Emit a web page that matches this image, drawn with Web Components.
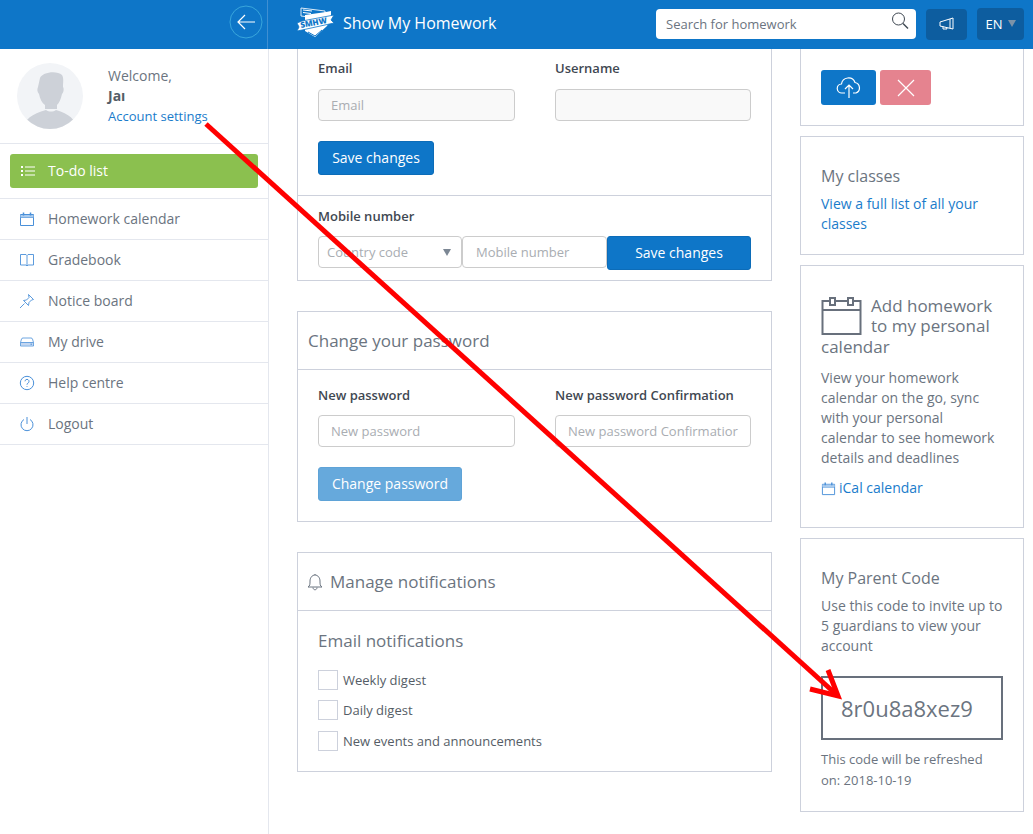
<!DOCTYPE html>
<html>
<head>
<meta charset="utf-8">
<title>Show My Homework</title>
<style>
    html, body { margin: 0; height: 834px; overflow: hidden; background: #fff; }
    body { font: 14px/20px "Open Sans", sans-serif; color: #6b7480; }
</style>
</head>
<body>
<smhw-app>
    <smhw-header slot="header"></smhw-header>
    <smhw-sidebar slot="sidebar">
        <nav-item label="Homework calendar" icon="calendar"></nav-item>
        <nav-item label="Gradebook" icon="book"></nav-item>
        <nav-item label="Notice board" icon="pin"></nav-item>
        <nav-item label="My drive" icon="drive"></nav-item>
        <nav-item label="Help centre" icon="help"></nav-item>
        <nav-item label="Logout" icon="power"></nav-item>
    </smhw-sidebar>
    <account-forms slot="main"></account-forms>
    <side-panels slot="aside"></side-panels>
</smhw-app>
<red-arrow></red-arrow>

<script>
const ICONS = {
    calendar: '<path d="M1.500 3.500h13v11h-13zM1.500 6.500h13"/><path d="M1.500 4h13v2.500h-13z" fill="#a9cbee" stroke="none"/><path d="M4.500 1.500v3M11.500 1.500v3" stroke-width="1.500"/>',
    book: '<path d="M1.500 2.500H7l1 1 1-1h5.500v10.500H9l-1 1-1-1H1.500zM8 3.500V14" stroke-width=".9"/>',
    pin: '<path d="M9.500 1.500l5 5-2 .5-2.500 2.500-.5 3-5-5 3-.5L10 4.500zM5.500 10.500L1 15" stroke-width=".9"/>',
    drive: '<path d="M2 8.500h12v3H2z" fill="#c3d6f0" stroke="none"/><path d="M1.500 8.500l1-3.500q.3-1 1.500-1h8q1.200 0 1.500 1l1 3.500v3.500h-13zM1.500 8.500h13" stroke-width=".8"/><path d="M11.500 10.200h1.500"/>',
    help: '<circle cx="8" cy="8" r="6.700"/><path d="M6 6.300a2 2 0 1 1 3 1.800c-.7.4-1 .8-1 1.600M8 11.200v.8"/>',
    power: '<path d="M5 3.500a6 6 0 1 0 6 0M8 1v7"/>'
};

// shared by all the form pieces
const FORM_CSS = `
    .label { font-size: 13px; line-height: 18px; font-weight: 600; color: #3f4852; margin: 0 0 11px; }
    .input {
        box-sizing: border-box; height: 32px; border: 1px solid #ccc; border-radius: 4px;
        padding: 0 12px; font-size: 13px; line-height: 30px; color: #a9adb2; background: #fff;
        white-space: nowrap; overflow: hidden;
    }
    .input.off { background: #f9f9f9; }
    .btn {
        box-sizing: border-box; display: inline-flex; align-items: center; justify-content: center;
        height: 34px; padding: 0; background: #0e76c8; border: 1px solid #0c6cb8;
        border-radius: 3px; color: #fff; font-size: 14px; white-space: nowrap;
    }
`;

class SmhwApp extends HTMLElement {
    constructor() {
        super();
        this.attachShadow({mode: 'open'});
        this.shadowRoot.innerHTML = `
        <style>
            :host { display: grid; grid-template-columns: 269px 1fr; grid-template-rows: 49px 785px; height: 834px; overflow: hidden; }
            .head { grid-column: 1 / 3; }
            .body { display: flex; align-items: flex-start; gap: 28px; padding-left: 28px; padding-right: 9px; }
        </style>
        <div class="head"><slot name="header"></slot></div>
        <slot name="sidebar"></slot>
        <div class="body"><slot name="main"></slot><slot name="aside"></slot></div>`;
    }
}

class SmhwHeader extends HTMLElement {
    constructor() {
        super();
        this.attachShadow({mode: 'open'});
        this.shadowRoot.innerHTML = `
        <style>
            :host { display: flex; align-items: center; height: 49px; background: #0e76c8; color: #fff; font-family: "Open Sans", sans-serif; }
            .back { box-sizing: border-box; width: 268px; height: 49px; padding: 5px 4px 0 0; display: flex; justify-content: flex-end; border-right: 1px solid #3f8fd2; }
            .back svg { display: block; }
            .brand { display: flex; align-items: center; gap: 8px; margin-left: 29px; font-size: 16px; flex: 1; padding-bottom: 4px; }
            .brand svg { margin-left: -1px; margin-top: 1px; }
            .search {
                box-sizing: border-box; width: 260px; height: 30px; background: #fff; border-radius: 4px;
                padding: 0 10px; margin-top: -1px; display: flex; align-items: center; justify-content: space-between;
                color: #6b7480; font-size: 13px;
            }
            .search svg { margin: -6px -3px 0 0; }
            .tool { box-sizing: border-box; height: 31px; background: #0d5d9f; border-radius: 4px; display: flex; align-items: center; justify-content: center; margin-top: -1px; }
            .megaphone { width: 41px; margin-left: 10px; }
            .lang { width: 47px; height: 32px; margin: -2px 9px 0 10px; font-size: 13px; gap: 5px; }
            .lang i { width: 0; height: 0; border: 4.500px solid transparent; border-top: 7px solid #7c93a8; border-bottom: 0; }
        </style>
        <div class="back">
            <svg width="34" height="34" viewBox="0 0 34 34" fill="none" stroke="#fff">
                <circle cx="17" cy="17" r="16" stroke="#39a6dc"/>
                <path d="M26 17H9M16 10l-7 7 7 7" stroke-width="1.200"/>
            </svg>
        </div>
        <div class="brand">
            <svg width="39" height="32" viewBox="0 0 39 32">
                <path d="M5 1l24 3v8l-24-3z" fill="none" stroke="#dcebf7"/>
                <path d="M7 3l9 1M7 5.500l8 1" stroke="#fff"/>
                <path d="M9 8l21-3 5-1v7l-4 8-12 11-10-6v-8z" fill="#fff"/>
                <path d="M1 16l5-2 32-6-3 5 3 3-32 7-5 1 2-4z" fill="#fff" stroke="#0e76c8" stroke-width=".8"/>
                <path d="M12 25l7 4 7-6" fill="none" stroke="#0e76c8"/>
                <text x="5" y="21" transform="rotate(-11 5 21)" font-size="8" font-weight="800" fill="#0e76c8" font-family="Open Sans, sans-serif">SMHW</text>
            </svg>
            <span>Show My Homework</span>
        </div>
        <div class="search">
            <span>Search for homework</span>
            <svg width="18" height="18" viewBox="0 0 18 18" fill="none" stroke="#3f4852"><circle cx="7.500" cy="7" r="6"/><path d="M12 11.500l5 5" stroke-width="1.400"/></svg>
        </div>
        <div class="tool megaphone">
            <svg width="16" height="14" viewBox="0 0 16 14" fill="none" stroke="#fff"><path d="M1 5l13-4v11L1 9zM4 9.500v2.500h4l-.5-1.500"/><path d="M11 2v9"/></svg>
        </div>
        <div class="tool lang">EN <i></i></div>`;
    }
}

class SmhwSidebar extends HTMLElement {
    constructor() {
        super();
        this.attachShadow({mode: 'open'});
        this.shadowRoot.innerHTML = `
        <style>
            :host { display: block; box-sizing: border-box; height: 785px; border-right: 1px solid #e4e7ee; color: #6b7480; font-family: "Open Sans", sans-serif; }
            .user { box-sizing: border-box; height: 95px; padding: 14px 17px 0; display: flex; gap: 25px; border-bottom: 1px solid #e4e7ee; }
            .user svg { flex: none; }
            .info { padding-top: 3px; font-size: 14px; }
            .info b { display: block; color: #555d66; }
            .info a { display: block; color: #1a7ccb; font-size: 13px; }
            .todo { box-sizing: border-box; height: 55px; padding: 10px; border-bottom: 1px solid #e4e7ee; }
            .todo div { height: 34px; background: #8bc04f; border-radius: 3px; color: #fff; display: flex; align-items: center; gap: 12px; padding-left: 10px; }
        </style>
        <div class="user">
            <svg width="66" height="66" viewBox="0 0 66 66">
                <defs><clipPath id="round"><circle cx="33" cy="33" r="33"/></clipPath></defs>
                <circle cx="33" cy="33" r="33" fill="#f2f4f7"/>
                <g clip-path="url(#round)" fill="#cdd1d8">
                    <path d="M23 15c2-6 17-8 22-3 2 3 1 8 1 12 1 1 1 5-1 7-1 5-3 9-5 11v4l-12 0v-4c-3-2-5-6-6-11-2-2-2-5-1-7z"/>
                    <path d="M7 66c0-10 8-15 22-19 3 2 7 2 10 0 13 4 20 9 20 19z"/>
                </g>
            </svg>
            <div class="info">Welcome,<b>Jaı</b><a>Account settings</a></div>
        </div>
        <div class="todo"><div>
            <svg width="16" height="12" viewBox="0 0 16 12" fill="none" stroke="#fff"><path d="M5 2h10M5 6h10M5 10h10"/><path d="M1 2h2M1 6h2M1 10h2" stroke-width="2"/></svg>
            To-do list
        </div></div>
        <slot></slot>`;
    }
}

class NavItem extends HTMLElement {
    connectedCallback() {
        if (this.shadowRoot) return;
        this.attachShadow({mode: 'open'});
        this.shadowRoot.innerHTML = `
        <style>
            :host { display: flex; box-sizing: border-box; height: 41px; align-items: center; gap: 13px; padding-left: 19px; border-bottom: 1px solid #e4e7ee; }
            svg { flex: none; }
        </style>
        <svg width="16" height="16" viewBox="0 0 16 16" fill="none" stroke="#4a90d9">${ICONS[this.getAttribute('icon')]}</svg>
        <span>${this.getAttribute('label')}</span>`;
    }
}

class SmhwCard extends HTMLElement {
    constructor() {
        super();
        this.attachShadow({mode: 'open'});
        this.shadowRoot.innerHTML = `
        <style>
            :host { display: block; box-sizing: border-box; border: 1px solid #cdd1dc; background: #fff; }
            :host([cut]) { border-top: 0; }
            .title { display: none; align-items: center; gap: 7px; height: 57px; padding-left: 10px; border-bottom: 1px solid #cdd1dc; font-size: 17px; color: #6b7480; box-sizing: content-box; }
            :host([heading]) .title { display: flex; }
        </style>
        <div class="title"><slot name="icon"></slot><span id="t"></span></div>
        <slot></slot>`;
        this.shadowRoot.getElementById('t').textContent = this.getAttribute('heading') || '';
    }
}

class AccountForms extends HTMLElement {
    constructor() {
        super();
        this.attachShadow({mode: 'open'});
        this.shadowRoot.innerHTML = `
        <style>
            :host { display: flex; flex-direction: column; gap: 30px; width: 475px; flex: none; font-size: 13px; }
            ${FORM_CSS}
            .pad { padding: 10px 20px 20px; }
            .grid { display: grid; grid-template-columns: 197px 196px; column-gap: 40px; }
            .grid + .btn { margin-top: 20px; }
            hr { border: 0; border-top: 1px solid #cdd1dc; margin: 0; }
            .phone { display: flex; align-items: flex-start; }
            .select { width: 144px; display: flex; justify-content: space-between; align-items: center; padding-left: 8px; padding-right: 10px; }
            .select i { width: 0; height: 0; border: 4px solid transparent; border-top: 7px solid #7c8794; border-bottom: 0; }
            .mobile { width: 145px; padding-left: 13px; }
            .save { width: 144px; }
            h4 { font-size: 17px; font-weight: 400; line-height: 22px; margin: 0 0 18px; color: #6b7480; }
            .check { display: flex; align-items: center; gap: 5px; height: 20px; color: #555d66; margin-bottom: 10px; }
            .check:last-child { margin-top: 11px; }
            .check i { box-sizing: border-box; width: 20px; height: 20px; border: 1px solid #cdd1dc; }
        </style>
        <smhw-card cut>
            <div class="pad">
                <div class="grid">
                    <div><p class="label" style="margin-bottom:12px">Email</p><div class="input off">Email</div></div>
                    <div><p class="label" style="margin-bottom:12px">Username</p><div class="input off"></div></div>
                </div>
                <div class="btn" style="width:116px">Save changes</div>
            </div>
            <hr>
            <div class="pad" style="padding:11px 20px 10px">
                <p class="label">Mobile number</p>
                <div class="phone">
                    <div class="input select">Country code <i></i></div>
                    <div class="input mobile">Mobile number</div>
                    <div class="btn save">Save changes</div>
                </div>
            </div>
        </smhw-card>
        <smhw-card heading="Change your password">
            <div class="pad" style="padding-top:16px">
                <div class="grid">
                    <div><p class="label">New password</p><div class="input">New password</div></div>
                    <div><p class="label">New password Confirmation</p><div class="input">New password Confirmatior</div></div>
                </div>
                <div class="btn" style="width:144px;background:#66a9dc;border-color:#5fa3d7">Change password</div>
            </div>
        </smhw-card>
        <smhw-card heading="Manage notifications">
            <svg slot="icon" width="16" height="18" viewBox="0 0 16 18" fill="none" stroke="#6b7480" style="display:block;margin-left:-1px"><path d="M1 14c2-1 2-3 2-6s2-6 5-6 5 3 5 6 0 5 2 6zM6 14.500c0 3 4 3 4 0M8 1v1"/></svg>
            <div class="pad" style="padding:19px 20px 10px">
                <h4>Email notifications</h4>
                <div class="check"><i></i>Weekly digest</div>
                <div class="check" style="margin-bottom:0"><i></i>Daily digest</div>
                <div class="check"><i></i>New events and announcements</div>
            </div>
        </smhw-card>`;
    }
}

class SidePanels extends HTMLElement {
    constructor() {
        super();
        this.attachShadow({mode: 'open'});
        this.shadowRoot.innerHTML = `
        <style>
            :host { display: flex; flex-direction: column; gap: 10px; width: 224px; flex: none; font-size: 14px; }
            ${FORM_CSS}
            .pad { padding: 29px 20px 20px; }
            h3 { font-size: 16px; font-weight: 400; line-height: 20px; margin: 0 0 8px; color: #6b7480; }
            a { color: #1a7ccb; }
            p { margin: 0; }
            .tools { display: flex; gap: 4px; padding: 21px 20px 20px; }
            .tools div { box-sizing: border-box; height: 35px; border-radius: 3px; display: flex; align-items: center; justify-content: center; }
            .up { width: 55px; background: #0e76c8; }
            .del { width: 51px; background: #e5838f; }
            .cal { float: left; margin: 1px 9px 0 0; display: block; }
            .ical { display: flex; align-items: center; gap: 3px; margin-top: 10px; }
            .code { box-sizing: border-box; height: 64px; border: 2px solid #68707c; margin: 20px 0 9px; font-size: 22px; display: flex; align-items: center; padding-left: 18px; }
            .small { font-size: 13px; line-height: 21px; }
        </style>
        <smhw-card cut>
            <div class="tools">
                <div class="up"><svg width="26" height="22" viewBox="0 0 26 22" fill="none" stroke="#fff" stroke-width="1.200"><path d="M9 16H6a4.500 4.500 0 0 1-.5-9 7 7 0 0 1 13.500-1.500 5.500 5.500 0 0 1 1 10.500h-3"/><path d="M13 21V9M9 12l4-4 4 4"/></svg></div>
                <div class="del"><svg width="18" height="18" viewBox="0 0 18 18" stroke="#fff" stroke-width="1.200"><path d="M1 1l16 16M17 1L1 17"/></svg></div>
            </div>
        </smhw-card>
        <smhw-card>
            <div class="pad">
                <h3>My classes</h3>
                <a>View a full list of all your classes</a>
            </div>
        </smhw-card>
        <smhw-card>
            <div class="pad" style="padding-top:30px;padding-bottom:29px">
                <h3 style="font-size:17px;line-height:20.400px;margin-bottom:11px">
                    <svg class="cal" width="41" height="38" viewBox="0 0 41 38" fill="none" stroke="#68707c" stroke-width="2"><rect x="1.500" y="4" width="38" height="33"/><path d="M1 13h39" /><rect x="9" y="1" width="5" height="7" fill="#fff"/><rect x="27" y="1" width="5" height="7" fill="#fff"/></svg>
                    Add homework to my personal calendar
                </h3>
                <p>View your homework calendar on the go, sync with your personal calendar to see homework details and deadlines</p>
                <div class="ical"><svg width="15" height="15" viewBox="0 0 16 16" fill="none" stroke="#4a90d9">${ICONS.calendar}</svg><a>iCal calendar</a></div>
            </div>
        </smhw-card>
        <smhw-card>
            <div class="pad">
                <h3>My Parent Code</h3>
                <p>Use this code to invite up to 5 guardians to view your account</p>
                <div class="code">8r0u8a8xez9</div>
                <p class="small">This code will be refreshed on: 2018-10-19</p>
            </div>
        </smhw-card>`;
    }
}

// the annotation drawn over the screenshot
class RedArrow extends HTMLElement {
    constructor() {
        super();
        this.attachShadow({mode: 'open'});
        this.shadowRoot.innerHTML = `
        <style>:host { display: block; position: absolute; left: 0; top: 0; width: 1033px; height: 834px; pointer-events: none; }</style>
        <svg width="1033" height="834" fill="none" stroke="#f00" stroke-width="5">
            <path d="M206 124L838 696"/>
            <path d="M828 670L838 696L810 689"/>
        </svg>`;
    }
}

customElements.define('smhw-app', SmhwApp);
customElements.define('smhw-header', SmhwHeader);
customElements.define('smhw-sidebar', SmhwSidebar);
customElements.define('nav-item', NavItem);
customElements.define('smhw-card', SmhwCard);
customElements.define('account-forms', AccountForms);
customElements.define('side-panels', SidePanels);
customElements.define('red-arrow', RedArrow);
</script>
</body>
</html>
